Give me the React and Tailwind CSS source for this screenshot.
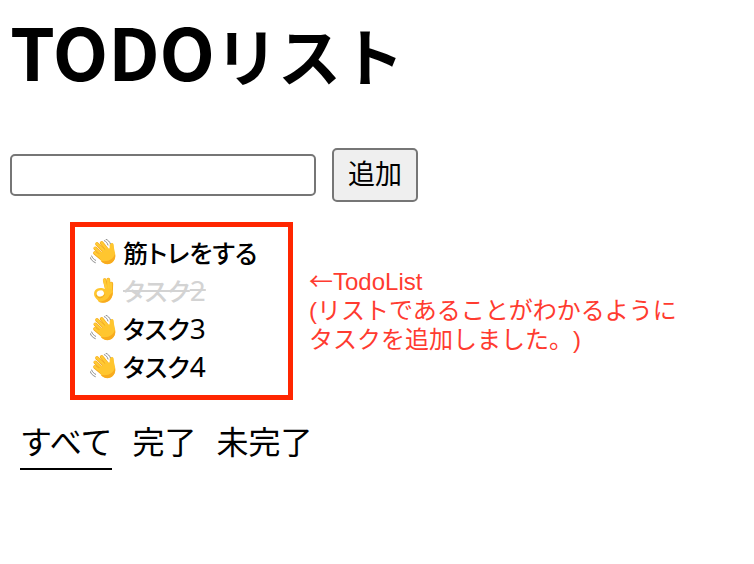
import { useState } from 'react';
import clsx from 'clsx';

const initialTodos = [
  { id: 1, title: '筋トレをする', done: false },
  { id: 2, title: 'タスク2', done: true },
  { id: 3, title: 'タスク3', done: false },
  { id: 4, title: 'タスク4', done: false },
];

const filters = [
  { key: 'all', label: 'すべて' },
  { key: 'done', label: '完了' },
  { key: 'undone', label: '未完了' },
];

function WavingHand() {
  return (
    <svg viewBox="0 0 78 78" className="size-[26px]" aria-hidden="true">
      <g fill="none" strokeLinecap="round">
        <g stroke="#f5a81c" strokeWidth="11">
          <path d="M16 28 L42 52" />
          <path d="M21 15 L48 42" />
          <path d="M35 12 L54 36" />
          <path d="M15 42 L34 58" />
        </g>
        <g stroke="#ffcb35" strokeWidth="7">
          <path d="M15 27 L42 51" />
          <path d="M20 14 L48 41" />
          <path d="M35 11 L54 35" />
          <path d="M14 41 L34 57" />
        </g>
      </g>
      <path
        d="M24 48 L52 26 C57 31 59 30 59 24 C58 16 61 11 67 12 C73 14 71 23 73 32 C77 46 78 59 68 69 C58 78 44 77 35 68 Z"
        fill="#ffc62f"
      />
      <path d="M32 65 C42 77 58 79 68 69 C75 62 77 55 75 45 C69 62 53 70 32 65 Z" fill="#f8ab1e" />
      <g fill="none" stroke="#8a8a8a" strokeWidth="3" strokeLinecap="round">
        <path d="M43 5 C48 7 52 11 54 18" />
        <path d="M48 1 C54 3 59 8 61 14" />
        <path d="M5 51 C7 57 11 61 17 64" />
        <path d="M1 56 C3 63 9 68 16 71" />
      </g>
    </svg>
  );
}

function OkHand() {
  return (
    <svg viewBox="0 0 78 78" className="size-[26px]" aria-hidden="true">
      <g fill="none" strokeLinecap="round">
        <g stroke="#f5a81c" strokeWidth="11">
          <path d="M44 9 L52 42" />
          <path d="M55 8 L57 40" />
          <path d="M64 20 L63 48" />
        </g>
        <g stroke="#ffcb35" strokeWidth="8">
          <path d="M43 9 L51 42" />
          <path d="M55 8 L56 40" />
          <path d="M63 20 L62 48" />
        </g>
      </g>
      <path
        d="M46 36 C52 32 65 34 68 42 C70 52 66 62 60 68 C52 77 36 78 26 74 C23 68 18 66 15 60 C10 51 12 40 21 35 C29 31 39 33 46 36 Z"
        fill="#ffc62f"
      />
      <path d="M68 46 C69 64 56 77 42 77 C35 77 30 76 26 74 C43 73 56 65 59 54 Z" fill="#f8ab1e" />
      <ellipse cx="31" cy="49" rx="11" ry="9" fill="#fff" transform="rotate(-15 31 49)" />
      <path d="M19 54 C22 66 38 65 44 52" fill="none" stroke="#e8981a" strokeWidth="2" />
    </svg>
  );
}

// 数字だけ細めの欧文フォントで表示する
function TodoTitle({ title }) {
  return title.split(/(\d+)/).map((part, i) =>
    /^\d+$/.test(part) ? (
      <span key={i} className="font-['Noto_Sans',sans-serif] text-[28px] font-normal">
        {part}
      </span>
    ) : (
      part
    ),
  );
}

function TodoItem({ todo, onToggle }) {
  return (
    <li className="flex h-[38px] items-center">
      <button type="button" onClick={() => onToggle(todo.id)} className="flex cursor-pointer items-center gap-[7px]">
        {todo.done ? <OkHand /> : <WavingHand />}
        <span
          className={clsx(
            "text-[25px] leading-9 font-medium [font-feature-settings:'palt']",
            todo.done && 'text-[#d3d3d3] line-through',
          )}
        >
          <TodoTitle title={todo.title} />
        </span>
      </button>
    </li>
  );
}

export default function App() {
  const [todos, setTodos] = useState(initialTodos);
  const [text, setText] = useState('');
  const [filter, setFilter] = useState('all');

  const addTodo = (e) => {
    e.preventDefault();
    if (!text.trim()) return;
    setTodos([...todos, { id: Date.now(), title: text, done: false }]);
    setText('');
  };

  const toggleTodo = (id) => {
    setTodos(todos.map((todo) => (todo.id === id ? { ...todo, done: !todo.done } : todo)));
  };

  const visibleTodos = todos.filter((todo) => filter === 'all' || todo.done === (filter === 'done'));

  return (
    <main className="px-[10px] pt-0.5 font-['Noto_Sans_CJK_JP',sans-serif] text-black">
      <h1 className="text-[63px] leading-[96px] font-bold">
        <span className="text-[72px]">TODO</span>リスト
      </h1>

      <form onSubmit={addTodo} className="mt-[46px] flex items-center gap-4">
        <input
          type="text"
          aria-label="タスク"
          value={text}
          onChange={(e) => setText(e.target.value)}
          className="h-[42px] w-[306px] rounded-[5px] border-2 border-[#767676] bg-white px-1 text-[26px]"
        />
        <button
          type="submit"
          className="h-[54px] rounded-[5px] border-2 border-[#767676] bg-[#efefef] px-[14px] pb-1 text-[27px] leading-[44px]"
        >
          追加
        </button>
      </form>

      <div className="mt-5 ml-[60px] flex items-center gap-4">
        <ul className="w-[223px] border-[5px] border-[#ff2600] px-[15px] pt-[6px] pb-[10px]">
          {visibleTodos.map((todo) => (
            <TodoItem key={todo.id} todo={todo} onToggle={toggleTodo} />
          ))}
        </ul>
        <p className="pb-1 font-['Liberation_Sans','Noto_Sans_CJK_JP',sans-serif] text-[24px] leading-[29px] text-[#ff3b30] [text-spacing-trim:space-all]">
          <span className="font-['Noto_Sans_CJK_JP',sans-serif]">←</span>TodoList
          <br />
          (リストであることがわかるように
          <br />
          タスクを追加しました。)
        </p>
      </div>

      <div className="mt-5 ml-[10px] flex gap-5">
        {filters.map(({ key, label }) => (
          <button
            key={key}
            type="button"
            onClick={() => setFilter(key)}
            className={clsx(
              'cursor-pointer border-b-2 pb-2 text-[32px] leading-10',
              filter === key ? 'border-black' : 'border-transparent',
            )}
          >
            {label}
          </button>
        ))}
      </div>
    </main>
  );
}
